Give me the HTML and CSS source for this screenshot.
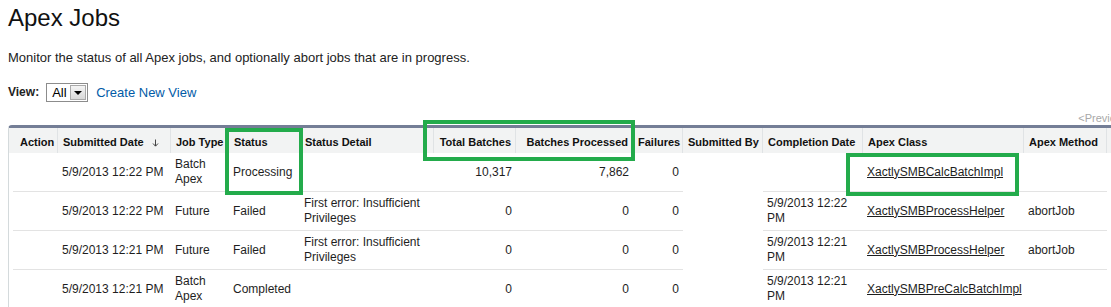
FILE: index.html
```
<!DOCTYPE html>
<html lang="en">
<head>
    <meta charset="UTF-8">
    <meta name="viewport" content="width=device-width, initial-scale=1.0">
    <title>Apex Jobs</title>
    <link rel="stylesheet" href="styles.css">
</head>
<body>
    <main class="page">
        <h1>Apex Jobs</h1>
        <p class="intro">Monitor the status of all Apex jobs, and optionally abort jobs that are in progress.</p>

        <section class="view-bar">
            <label>View:</label>
            <div class="fake-select">
                <span>All</span>
                <span class="drop-btn"><span class="tri"></span></span>
            </div>
            <a href="#" class="view-link">Create New View</a>
        </section>

        <div class="pager"><span class="off">&lt;Previous Page</span>&nbsp;|&nbsp;<span class="off">Next Page&gt;</span></div>

        <section class="list-frame">
            <table class="list">
                <colgroup>
                    <col class="w-action">
                    <col class="w-date">
                    <col class="w-type">
                    <col class="w-status">
                    <col class="w-detail">
                    <col class="w-total">
                    <col class="w-processed">
                    <col class="w-fail">
                    <col class="w-by">
                    <col class="w-done">
                    <col class="w-class">
                    <col class="w-method">
                    <col class="w-extra">
                </colgroup>
                <thead>
                    <tr>
                        <th class="first">Action</th>
                        <th>Submitted Date <svg class="sort" width="7" height="8" viewBox="0 0 7 8"><path d="M3.5 0.5v6.5M1 4.5l2.5 2.7 2.5-2.7" fill="none" stroke="#444" stroke-width="1"/></svg></th>
                        <th>Job Type</th>
                        <th>Status</th>
                        <th>Status Detail</th>
                        <th class="num">Total Batches</th>
                        <th class="num">Batches Processed</th>
                        <th class="num">Failures</th>
                        <th>Submitted By</th>
                        <th>Completion Date</th>
                        <th>Apex Class</th>
                        <th>Apex Method</th>
                        <th class="extra"></th>
                    </tr>
                </thead>
                <tbody>
                    <tr>
                        <td class="first"></td>
                        <td>5/9/2013 12:22 PM</td>
                        <td>Batch Apex</td>
                        <td>Processing</td>
                        <td></td>
                        <td class="num">10,317</td>
                        <td class="num">7,862</td>
                        <td class="num">0</td>
                        <td class="blank"></td>
                        <td></td>
                        <td><a href="#">XactlySMBCalcBatchImpl</a></td>
                        <td></td>
                        <td class="extra"><span class="tick"></span></td>
                    </tr>
                    <tr>
                        <td class="first"></td>
                        <td>5/9/2013 12:22 PM</td>
                        <td>Future</td>
                        <td>Failed</td>
                        <td>First error: Insufficient Privileges</td>
                        <td class="num">0</td>
                        <td class="num">0</td>
                        <td class="num">0</td>
                        <td class="blank"></td>
                        <td>5/9/2013 12:22 PM</td>
                        <td><a href="#">XactlySMBProcessHelper</a></td>
                        <td>abortJob</td>
                        <td class="extra"><span class="tick"></span></td>
                    </tr>
                    <tr>
                        <td class="first"></td>
                        <td>5/9/2013 12:21 PM</td>
                        <td>Future</td>
                        <td>Failed</td>
                        <td>First error: Insufficient Privileges</td>
                        <td class="num">0</td>
                        <td class="num">0</td>
                        <td class="num">0</td>
                        <td class="blank"></td>
                        <td>5/9/2013 12:21 PM</td>
                        <td><a href="#">XactlySMBProcessHelper</a></td>
                        <td>abortJob</td>
                        <td class="extra"><span class="tick"></span></td>
                    </tr>
                    <tr>
                        <td class="first"></td>
                        <td>5/9/2013 12:21 PM</td>
                        <td>Batch Apex</td>
                        <td>Completed</td>
                        <td></td>
                        <td class="num">0</td>
                        <td class="num">0</td>
                        <td class="num">0</td>
                        <td class="blank"></td>
                        <td>5/9/2013 12:21 PM</td>
                        <td><a href="#">XactlySMBPreCalcBatchImpl</a></td>
                        <td></td>
                        <td class="extra"><span class="tick"></span></td>
                    </tr>
                </tbody>
            </table>
        </section>

        <!-- green annotation boxes drawn over the screenshot -->
        <div class="mark mark-status"></div>
        <div class="mark mark-batches"></div>
        <div class="mark mark-class"></div>
    </main>
</body>
</html>
```

FILE: styles.css
```
html, body{
    margin: 0;
    padding: 0;
    overflow: hidden;
    background-color: white;
}

body{
    font-family: Arial, "Liberation Sans", Helvetica, sans-serif;
    color: #222;
}

.page{
    position: relative;
    width: max-content;
    padding-left: 8px;
}

h1{
    margin: 4px 0 0 0;
    font-size: 24px;
    line-height: 28px;
    font-weight: normal;
    color: #111;
}

.intro{
    margin: 18px 0 0 0;
    font-size: 13px;
    line-height: 15px;
}

/* view picker */

.view-bar{
    display: flex;
    align-items: center;
    height: 19px;
    margin-top: 18px;
    font-size: 12px;
}

.view-bar label{
    font-weight: bold;
    margin-right: 7px;
    margin-top: -2px;
}

.fake-select{
    display: flex;
    align-items: center;
    justify-content: space-between;
    box-sizing: border-box;
    width: 42px;
    height: 19px;
    padding: 0 1px 0 5px;
    border: 1px solid #8c8c8c;
    font-size: 13px;
    color: #000;
}

.drop-btn{
    display: flex;
    align-items: center;
    justify-content: center;
    box-sizing: border-box;
    width: 16px;
    height: 15px;
    border: 1px solid #a9a9a9;
    background: linear-gradient(#f4f4f4, #d8d8d8);
}

.tri{
    width: 0;
    height: 0;
    border-left: 4px solid transparent;
    border-right: 4px solid transparent;
    border-top: 4px solid #000;
}

.view-link{
    margin-left: 8px;
    margin-top: -1px;
    font-size: 13px;
    color: #015ba7;
    text-decoration: none;
}

.pager{
    margin-top: 10px;
    text-align: right;
    font-size: 11px;
    line-height: 13px;
    color: #a8a8a8;
}

/* list table */

.list-frame{
    border-top: 3px solid #747e96;
    border-left: 1px solid #d4dadc;
    border-top-left-radius: 4px;
}

.list{
    table-layout: fixed;
    width: 1214px;
    border-collapse: separate;
    border-spacing: 0;
}

.w-action{ width: 49px; }
.w-date{ width: 113px; }
.w-type{ width: 58px; }
.w-status{ width: 71px; }
.w-detail{ width: 134px; }
.w-total{ width: 82px; }
.w-processed{ width: 117px; }
.w-fail{ width: 50px; }
.w-by{ width: 80px; }
.w-done{ width: 100px; }
.w-class{ width: 161px; }
.w-method{ width: 83px; }
.w-extra{ width: 116px; }

.list th{
    box-sizing: border-box;
    height: 25px;
    padding: 3px 4px 0 5px;
    background-color: #f2f3f3;
    border-right: 1px solid #e0e3e5;
    font-size: 11px;
    line-height: 13px;
    font-weight: bold;
    color: #111;
    text-align: left;
    white-space: nowrap;
    overflow: hidden;
}

.list th.first{
    padding-left: 11px;
}

.list th.num{
    text-align: right;
}

.sort{
    margin-left: 5px;
    vertical-align: -1px;
}

.list td{
    padding: 4px 4px 4px 4px;
    border-bottom: 1px solid #e3e3e3;
    font-size: 12px;
    line-height: 15px;
    vertical-align: middle;
    color: #1e1e1e;
}

.list td.num{
    text-align: right;
}

.list td.first{
    border-bottom: none;
    padding-bottom: 5px;
    background: linear-gradient(#e3e3e3, #e3e3e3) no-repeat 4px 100% / calc(100% - 4px) 1px;
}

.list td.blank,
.list td.extra{
    border-bottom: none;
    padding-bottom: 5px;
}

.list td a{
    color: #1e1e1e;
    text-decoration: underline;
}

.tick{
    display: inline-block;
    width: 3px;
    height: 1px;
    margin-bottom: 9px;
    vertical-align: middle;
    background-color: #e0a040;
}

/* annotations */

.mark{
    position: absolute;
    box-sizing: border-box;
    border: 4px solid #23ab4b;
    pointer-events: none;
}

.mark-status{
    left: 225px;
    top: 124px;
    width: 78px;
    height: 67px;
}

.mark-batches{
    left: 423px;
    top: 116px;
    width: 212px;
    height: 41px;
}

.mark-class{
    left: 846px;
    top: 149px;
    width: 173px;
    height: 43px;
}
```
